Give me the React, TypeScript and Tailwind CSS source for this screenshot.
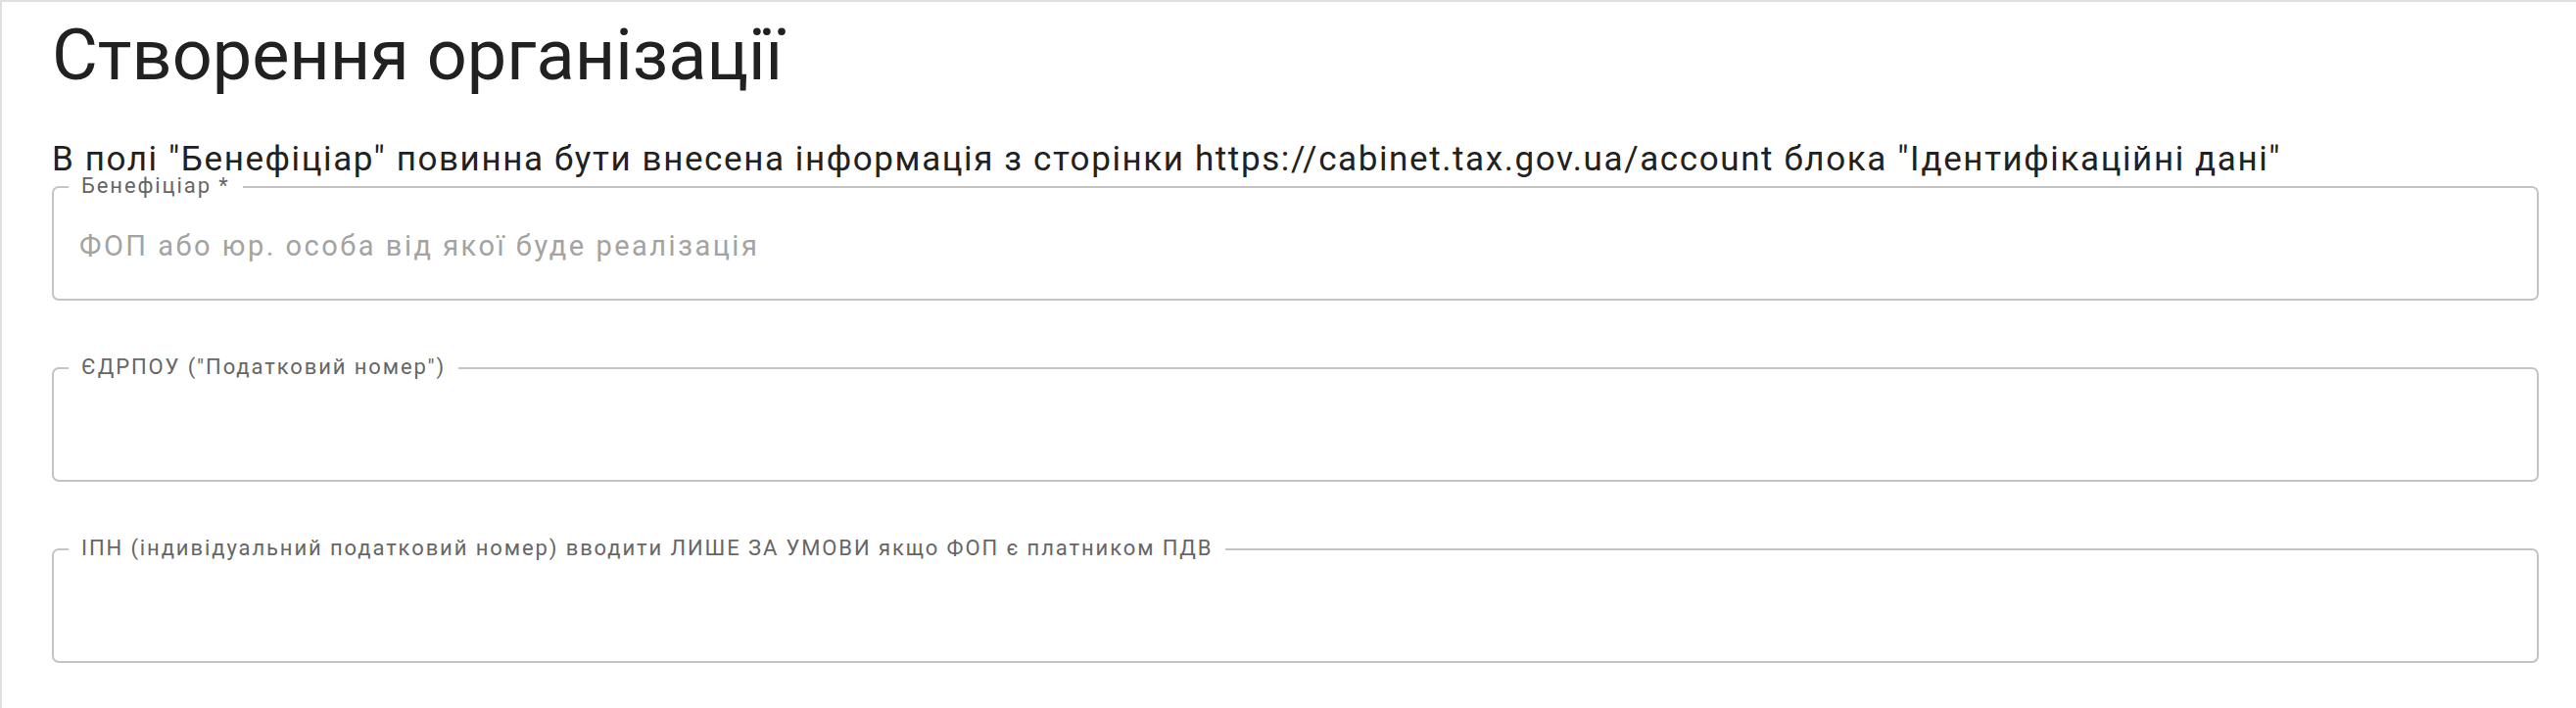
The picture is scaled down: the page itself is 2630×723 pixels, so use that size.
import React from "react";

type FieldProps = {
  label: string;
  placeholder?: string;
};

function OutlinedField({ label, placeholder }: FieldProps) {
  return (
    <div className="relative h-[117px] rounded-[7px] border-2 border-[#c4c4c4]">
      {/* notched label sits over the top border */}
      <span className="absolute left-[15px] -top-[12px] bg-white px-[13px] text-[22px] leading-[20px] tracking-[1.9px] text-[#666666]">
        {label}
      </span>
      <input
        className="h-full w-full rounded-[7px] bg-transparent px-[26px] pt-[4px] text-[29px] tracking-[2.5px] text-[#212121] outline-none placeholder:text-[#a3a3a3]"
        placeholder={placeholder}
      />
    </div>
  );
}

export default function App() {
  return (
    <div
      className="h-[723px] w-full overflow-hidden border-l-2 border-t-2 border-[#e0e0e0] bg-white pl-[51px] pr-[38px]"
      style={{ fontFamily: "Roboto, 'Noto Sans', sans-serif" }}
    >
      <h1 className="mt-[19px] text-[72px] font-normal leading-[72px] text-[#212121]">
        Створення організації
      </h1>
      <p className="mt-[53px] whitespace-nowrap text-[35px] leading-[34px] tracking-[1.6px] text-[#212121]">
        В полі "Бенефіціар" повинна бути внесена інформація з сторінки https://cabinet.tax.gov.ua/account блока
        "Ідентифікаційні дані"
      </p>
      <div className="mt-[10px] flex flex-col gap-[68px]">
        <OutlinedField label="Бенефіціар *" placeholder="ФОП або юр. особа від якої буде реалізація" />
        <OutlinedField label={'ЄДРПОУ ("Податковий номер")'} />
        <OutlinedField label="ІПН (індивідуальний податковий номер) вводити ЛИШЕ ЗА УМОВИ якщо ФОП є платником ПДВ" />
      </div>
    </div>
  );
}
